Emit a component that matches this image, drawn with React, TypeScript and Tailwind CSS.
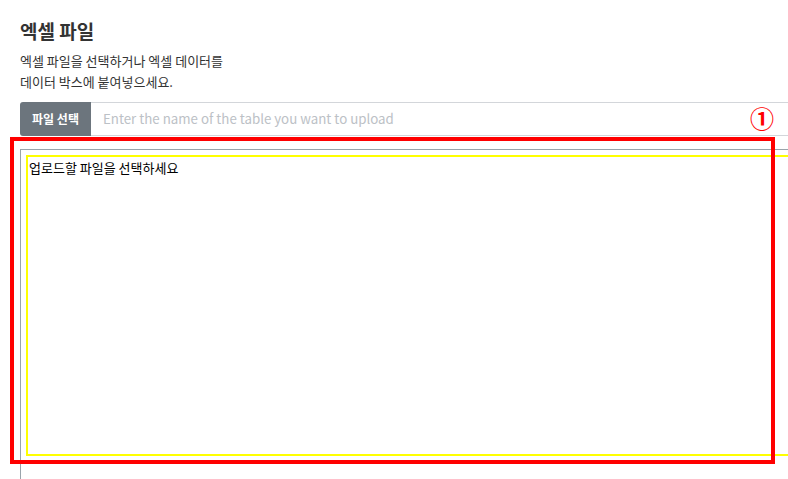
import React from 'react'

export default function App() {
  return (
    <div className="relative w-[788px] h-[479px] overflow-hidden bg-white font-['Noto_Sans_CJK_KR','Noto_Sans',sans-serif] text-[#333]">
      <div className="w-[840px] pl-5 pt-[18px]">
        <h2 className="text-[19px] leading-[26px] font-bold text-[#333]">엑셀 파일</h2>
        <p className="mt-[6px] text-[13px] leading-[21px] text-[#333]">
          엑셀 파일을 선택하거나 엑셀 데이터를
          <br />
          데이터 박스에 붙여넣으세요.
        </p>

        <div className="mt-[10px] flex h-[34px]">
          <button className="w-[71px] shrink-0 rounded-l-[3px] bg-[#6c757d] text-[12px] font-bold text-white">
            파일 선택
          </button>
          <input
            className="flex-1 border-y border-[#d3d6da] px-3 text-[13.3px] text-[#333] outline-none placeholder:text-[#bcc1c6]"
            placeholder="Enter the name of the table you want to upload"
          />
        </div>

        <div className="mt-[13px] h-[400px] border border-[#9aa4ab] pl-[5px] pt-[5px]">
          <div className="h-[301px] border-2 border-[#ffff00] pl-[1px] pt-[2px] text-[13px] leading-[18px] text-black">
            업로드할 파일을 선택하세요
          </div>
        </div>
      </div>

      {/* annotation */}
      <div className="absolute left-[10px] top-[137px] h-[327px] w-[765px] border-4 border-[#ff0000]" />
      <div className="absolute left-[750px] top-[103px] text-[24px] leading-[30px] font-bold text-[#ff0000]">①</div>
    </div>
  )
}
